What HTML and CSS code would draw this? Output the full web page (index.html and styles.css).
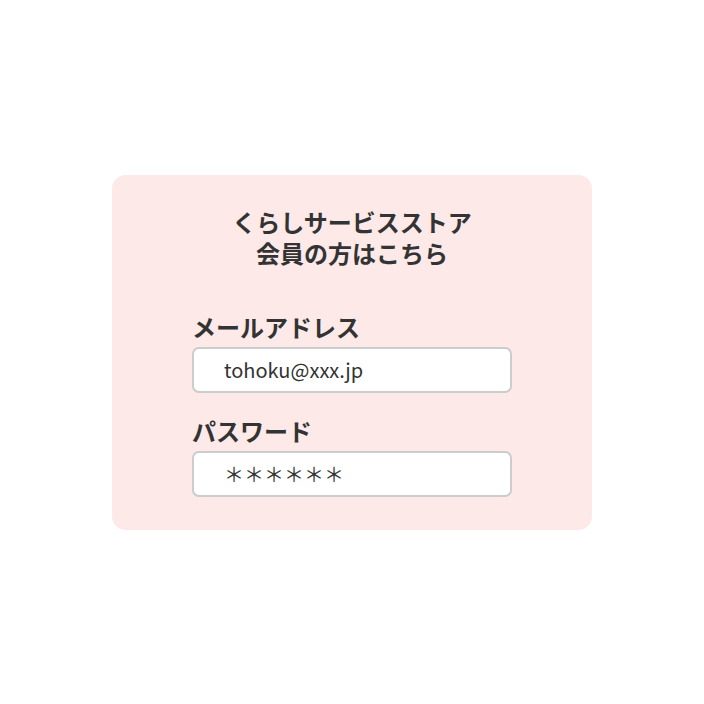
FILE: index.html
```html
<!DOCTYPE html>
<html lang="ja">
<head>
    <meta charset="UTF-8">
    <meta name="viewport" content="width=device-width, initial-scale=1.0">
    <title>くらしサービスストア ログイン</title>
    <link rel="stylesheet" href="styles.css">
</head>
<body>
    <div class="login-card">
        <h2 class="login-title">くらしサービスストア<br>会員の方はこちら</h2>

        <form class="login-form">
            <label class="field-label" for="email">メールアドレス</label>
            <input class="field-input" id="email" type="text" value="tohoku@xxx.jp">

            <label class="field-label" for="password">パスワード</label>
            <input class="field-input" id="password" type="text" value="＊＊＊＊＊＊">
        </form>
    </div>
</body>
</html>
```

FILE: styles.css
```css
body {
    font-family: "Noto Sans CJK JP", "Noto Sans", sans-serif;
    display: flex;
    justify-content: center;
    align-items: center;
    height: 704px;
    margin: 0;
    background-color: #ffffff;
    color: #333333;
}

.login-card {
    width: 320px;
    padding: 31px 80px 33px;
    border-radius: 14px;
    background-color: #fce9e8;
}

.login-title {
    margin: 0;
    font-size: 24px;
    font-weight: bold;
    line-height: 31px;
    text-align: center;
}

.login-form {
    display: flex;
    flex-direction: column;
    margin-top: 43px;
}

.field-label {
    font-size: 24px;
    font-weight: bold;
    line-height: 32px;
    margin-bottom: 4px;
}

.field-label + .field-input {
    margin-bottom: 22px;
}

.field-input:last-child {
    margin-bottom: 0;
}

.field-input {
    box-sizing: border-box;
    width: 320px;
    height: 46px;
    padding: 0 0 0 30px;
    border: 2px solid #cccccc;
    border-radius: 7px;
    background-color: #ffffff;
    font-family: "Noto Sans CJK JP", "Noto Sans", sans-serif;
    font-size: 20px;
    color: #333333;
    outline: none;
}
```
